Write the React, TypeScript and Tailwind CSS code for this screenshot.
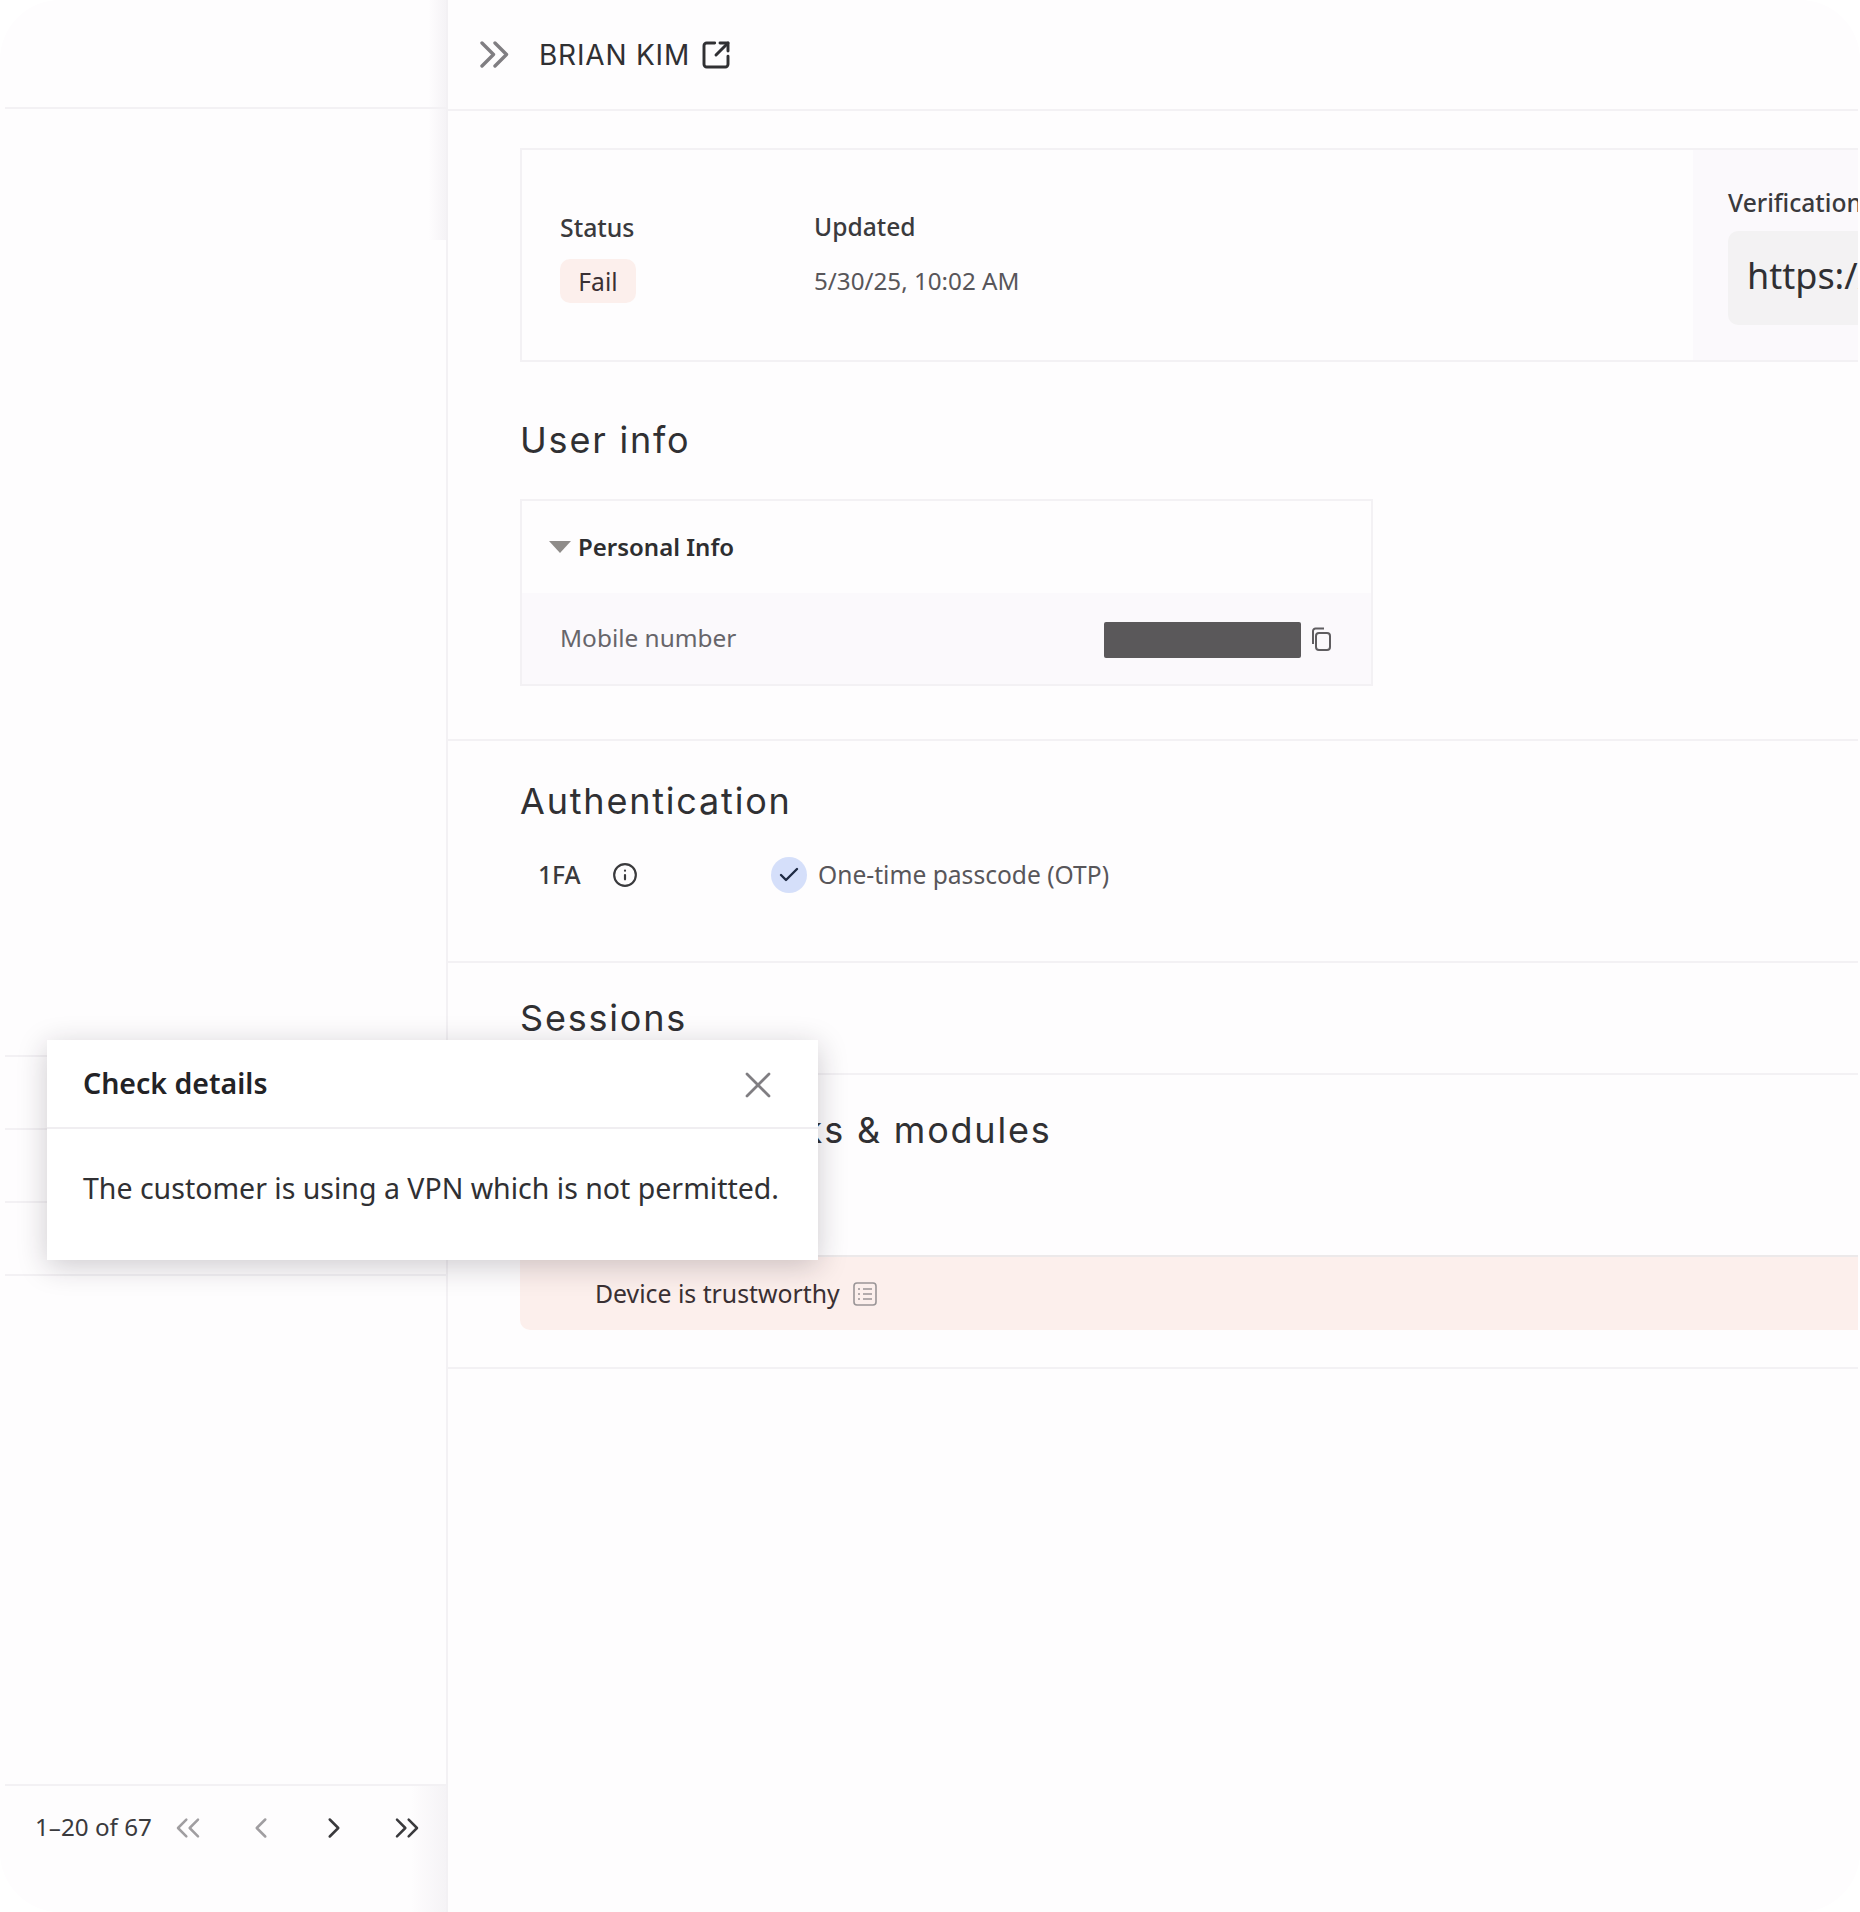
import { Check, ChevronLeft, ChevronRight, ChevronsLeft, ChevronsRight, Info, SquareArrowOutUpRight, X } from 'lucide-react';

const body = 'font-["Noto_Sans",sans-serif]';
const heading = 'font-["Inter",sans-serif] text-[36px] leading-[44px] font-normal tracking-[1.8px] text-[#303033]';

function CopyIcon() {
  return (
    <svg viewBox="0 0 22 24" className="h-[24px] w-[22px] text-[#5f5d60]" fill="none" stroke="currentColor" strokeWidth="2">
      <rect x="6" y="6" width="14" height="17" rx="3" />
      <path d="M3 17V4a2.5 2.5 0 0 1 2.5-2.5H14" />
    </svg>
  );
}

function ListIcon() {
  return (
    <svg viewBox="0 0 24 24" className="h-[24px] w-[24px] text-[#9a9597]" fill="none" stroke="currentColor" strokeWidth="1.6">
      <rect x="1" y="1" width="22" height="22" rx="3" />
      <path d="M5 7h2M10 7h9M5 12h2M10 12h9M5 17h2M10 17h9" />
    </svg>
  );
}

function Sidebar() {
  return (
    <aside className="flex h-full w-[442px] shrink-0 flex-col border-r border-[#f3f1f4]">
      <div className="h-[109px] shrink-0 border-b-2 border-[#f3f1f4] bg-gradient-to-r from-transparent from-[96%] to-[#f5f3f6]" />
      <div className="h-[131px] shrink-0 bg-gradient-to-r from-transparent from-[96%] to-[#f5f3f6]" />
      <div className="mt-[815px] flex flex-col">
        {[0, 1, 2, 3].map((row) => (
          <div key={row} className="h-[73px] border-t-2 border-[#f3f1f4]" />
        ))}
      </div>
      <div className="mt-auto flex h-[128px] items-start border-t-2 border-[#f3f1f4] bg-gradient-to-r from-transparent from-[92%] to-[#f5f3f6] pl-[30px] pt-[24px]">
        <span className="w-[116px] shrink-0 whitespace-nowrap text-[24.2px] leading-[34px] text-[#3a3a3d]">1–20 of 67</span>
        <div className="flex items-center pt-[1px]">
          <span className="flex h-[34px] w-[73px] items-center justify-center"><ChevronsLeft className="size-[40px] shrink-0 text-[#a09ea1]" strokeWidth={1.5} /></span>
          <span className="flex h-[34px] w-[73px] items-center justify-center"><ChevronLeft className="size-[34px] shrink-0 text-[#a09ea1]" strokeWidth={1.8} /></span>
          <span className="flex h-[34px] w-[73px] items-center justify-center"><ChevronRight className="size-[34px] shrink-0 text-[#3a3a3d]" strokeWidth={1.8} /></span>
          <span className="flex h-[34px] w-[73px] items-center justify-center"><ChevronsRight className="size-[40px] shrink-0 text-[#3a3a3d]" strokeWidth={1.5} /></span>
        </div>
      </div>
    </aside>
  );
}

function StatusCard() {
  return (
    <div className="ml-[72px] mt-[37px] flex h-[214px] border-2 border-r-0 border-[#f3f1f4]">
      <div className="flex w-[1171px] shrink-0 pl-[38px] pt-[60px]">
        <div className="w-[254px]">
          <div className="text-[24.8px] leading-[34px] font-medium text-[#3a3a3d]">Status</div>
          <div className="mt-[15px] flex h-[44px] w-[76px] items-center justify-center rounded-[10px] bg-[#fcefec] pt-[2px] text-[24.6px] text-[#3a3033]">Fail</div>
        </div>
        <div>
          <div className="text-[24.6px] leading-[34px] font-medium text-[#3a3a3d]">Updated</div>
          <div className="mt-[20px] text-[24.2px] leading-[34px] text-[#58565a]">5/30/25, 10:02 AM</div>
        </div>
      </div>
      <div className="flex-1 overflow-hidden bg-[#fbf9fc] pl-[35px] pt-[36px]">
        <div className="whitespace-nowrap text-[24.6px] leading-[34px] font-medium text-[#3a3a3d]">Verification</div>
        <div className="mt-[11px] h-[94px] whitespace-nowrap rounded-l-[10px] bg-[#f3f2f3] pl-[19px] pt-[21px] text-[36px] leading-[48px] text-[#303033]">https://</div>
      </div>
    </div>
  );
}

function Main() {
  return (
    <main className="min-w-0 flex-1 border-l border-[#f3f1f4]">
      <header className="flex h-[111px] items-center border-b-2 border-[#f3f1f4] pl-[30px]">
        <svg viewBox="0 0 30 27" className="ml-[2px] h-[27px] w-[30px] text-[#807e82]" fill="none" stroke="currentColor" strokeWidth="3.4" strokeLinecap="round" strokeLinejoin="round">
          <path d="M2 2l11.5 11.5L2 25" />
          <path d="M15 2l11.5 11.5L15 25" />
        </svg>
        <span className="ml-[29px] font-['Inter',sans-serif] text-[28px] tracking-[0.8px] text-[#303033]">BRIAN KIM</span>
        <SquareArrowOutUpRight className="ml-[10px] size-[32px] text-[#303033]" strokeWidth={2.2} />
      </header>
      <StatusCard />
      <section className="h-[379px] border-b-2 border-[#f3f1f4] pl-[72px] pt-[56px]">
        <h2 className={heading}>User info</h2>
        <div className="mt-[37px] w-[853px] border-2 border-[#f3f1f4]">
          <div className="flex h-[92px] items-center pl-[27px]">
            <span className="h-0 w-0 border-x-[11px] border-t-[12px] border-x-transparent border-t-[#8f8c8a]" />
            <span className="ml-[7px] text-[24px] font-semibold text-[#2e2e30]">Personal Info</span>
          </div>
          <div className="flex h-[91px] items-center bg-[#fbf9fc] pl-[38px]">
            <span className="w-[544px] text-[24.4px] text-[#67656a]">Mobile number</span>
            <span className="mt-[3px] h-[36px] w-[197px] rounded-[2px] bg-[#5a585a]" />
            <span className="ml-[9px]"><CopyIcon /></span>
          </div>
        </div>
      </section>
      <section className="h-[222px] border-b-2 border-[#f3f1f4] pl-[72px] pt-[38px]">
        <h2 className={heading}>Authentication</h2>
        <div className="mt-[34px] flex items-center pl-[18px]">
          <span className="w-[74px] text-[24.6px] font-medium text-[#3a3a3d]">1FA</span>
          <Info className="size-[26px] text-[#3a3a3d]" />
          <span className="ml-[133px] flex size-[36px] items-center justify-center rounded-full bg-[#d5dffa]">
            <Check className="size-[24px] text-[#1f2a44]" strokeWidth={2.4} />
          </span>
          <span className="ml-[11px] text-[24.6px] text-[#58565a]">One-time passcode (OTP)</span>
        </div>
      </section>
      <section className="h-[112px] border-b-2 border-[#f3f1f4] pl-[72px] pt-[33px]">
        <h2 className={heading}>Sessions</h2>
      </section>
      <section className="h-[294px] border-b-2 border-[#f3f1f4] pl-[72px] pt-[33px]">
        <h2 className={heading}>Customer checks &amp; modules</h2>
        <div className="mt-[103px] flex h-[75px] items-center rounded-bl-[10px] border-t-2 border-[#ece9ea] bg-[#fcefec] pl-[75px]">
          <span className="text-[24.8px] text-[#3a3033]">Device is trustworthy</span>
          <span className="ml-[13px]"><ListIcon /></span>
        </div>
      </section>
    </main>
  );
}

export default function App() {
  return (
    <div className={`relative h-[1912px] w-[1860px] overflow-hidden bg-white ${body}`}>
      <div className="flex h-full overflow-hidden rounded-[60px] bg-[#fefdfe] pl-[5px] pr-[2px]">
        <Sidebar />
        <Main />
      </div>
      <div className="absolute left-[47px] top-[1040px] h-[220px] w-[771px] bg-white shadow-[0_6px_28px_rgba(30,25,35,0.22)]">
        <div className="flex h-[89px] items-center justify-between border-b-2 border-[#f0eef1] pl-[36px] pr-[38px]">
          <span className="text-[28.5px] font-semibold text-[#232326]">Check details</span>
          <X className="mt-[2px] size-[44px] text-[#807e82]" strokeWidth={1.5} />
        </div>
        <p className="pl-[36px] pt-[39px] text-[28.5px] leading-[40px] text-[#303033]">The customer is using a VPN which is not permitted.</p>
      </div>
    </div>
  );
}
